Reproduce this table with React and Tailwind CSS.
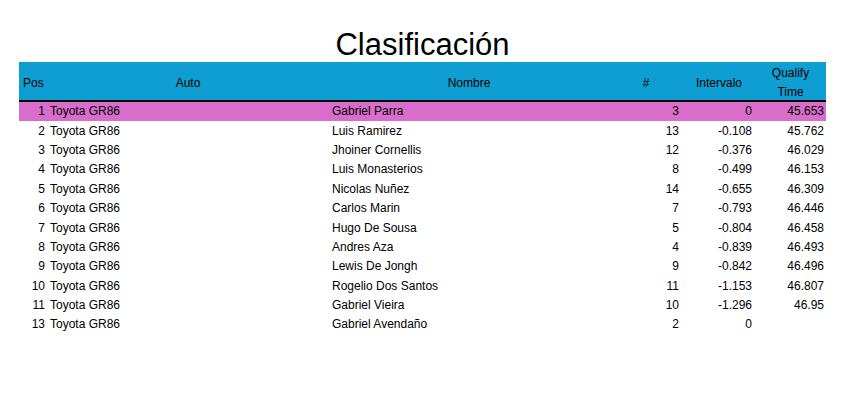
import React from 'react';

const rows = [
    { pos: 1, auto: 'Toyota GR86', nombre: 'Gabriel Parra', num: 3, intervalo: '0', time: '45.653' },
    { pos: 2, auto: 'Toyota GR86', nombre: 'Luis Ramirez', num: 13, intervalo: '-0.108', time: '45.762' },
    { pos: 3, auto: 'Toyota GR86', nombre: 'Jhoiner Cornellis', num: 12, intervalo: '-0.376', time: '46.029' },
    { pos: 4, auto: 'Toyota GR86', nombre: 'Luis Monasterios', num: 8, intervalo: '-0.499', time: '46.153' },
    { pos: 5, auto: 'Toyota GR86', nombre: 'Nicolas Nuñez', num: 14, intervalo: '-0.655', time: '46.309' },
    { pos: 6, auto: 'Toyota GR86', nombre: 'Carlos Marin', num: 7, intervalo: '-0.793', time: '46.446' },
    { pos: 7, auto: 'Toyota GR86', nombre: 'Hugo De Sousa', num: 5, intervalo: '-0.804', time: '46.458' },
    { pos: 8, auto: 'Toyota GR86', nombre: 'Andres Aza', num: 4, intervalo: '-0.839', time: '46.493' },
    { pos: 9, auto: 'Toyota GR86', nombre: 'Lewis De Jongh', num: 9, intervalo: '-0.842', time: '46.496' },
    { pos: 10, auto: 'Toyota GR86', nombre: 'Rogelio Dos Santos', num: 11, intervalo: '-1.153', time: '46.807' },
    { pos: 11, auto: 'Toyota GR86', nombre: 'Gabriel Vieira', num: 10, intervalo: '-1.296', time: '46.95' },
    { pos: 13, auto: 'Toyota GR86', nombre: 'Gabriel Avendaño', num: 2, intervalo: '0', time: '' },
];

const cols = 'grid grid-cols-[28px_282px_280px_74px_72px_71px]';

const App = () => {
    return (
        <div className="w-[866px] h-[400px] bg-white text-black font-['Liberation_Sans',Arial,sans-serif]">
            <div className="pl-[19px] w-[826px]">
                {/* Title */}
                <h1 className="pt-[28px] h-[62px] text-center text-[31px] leading-[34px]">
                    Clasificación
                </h1>

                {/* Header */}
                <div className={`${cols} h-[38px] bg-[#0f9ed2] border-b-[2px] border-black text-[12px] box-content`}>
                    <div className="pl-[4px] pt-[1px] flex items-center">Pos</div>
                    <div className="pt-[1px] flex items-center justify-center">Auto</div>
                    <div className="pt-[1px] flex items-center justify-center">Nombre</div>
                    <div className="pt-[1px] flex items-center justify-center">#</div>
                    <div className="pt-[1px] flex items-center justify-center">Intervalo</div>
                    <div className="pt-[2px] flex flex-col items-center justify-center leading-[19px]">
                        <span>Qualify</span>
                        <span>Time</span>
                    </div>
                </div>

                {/* Rows */}
                {rows.map((r, i) => (
                    <div
                        key={r.pos}
                        className={`${cols} h-[19.4px] items-center text-[12px] leading-[19px] ${i === 0 ? 'bg-[#d96dcc]' : ''}`}
                    >
                        <div className="text-right pr-[2px]">{r.pos}</div>
                        <div className="pl-[3px]">{r.auto}</div>
                        <div className="pl-[3px]">{r.nombre}</div>
                        <div className="text-right pr-[4px]">{r.num}</div>
                        <div className="text-right pr-[3px]">{r.intervalo}</div>
                        <div className="text-right pr-[2px]">{r.time}</div>
                    </div>
                ))}
            </div>
        </div>
    );
};

export default App;
